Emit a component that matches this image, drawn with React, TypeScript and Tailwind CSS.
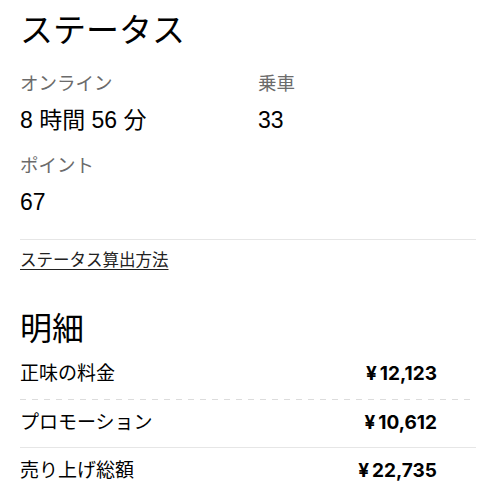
import React from 'react';

const stats = [
    { label: 'オンライン', value: '8 時間 56 分' },
    { label: '乗車', value: '33' },
    { label: 'ポイント', value: '67' },
];

const rows = [
    { label: '正味の料金', amount: '12,123', h: 'h-[50px]' },
    { label: 'プロモーション', amount: '10,612', h: 'h-[47px]' },
    { label: '売り上げ総額', amount: '22,735', h: 'h-[46px]' },
];

function Divider({ dashed }: { dashed?: boolean }) {
    if (dashed) {
        return <div className="h-px bg-[repeating-linear-gradient(to_right,#dcdcdc_0_6px,transparent_6px_12px)]" />;
    }
    return <div className="h-px bg-[#e6e6e6]" />;
}

export default function App() {
    return (
        <div className="w-[496px] h-[500px] bg-white px-5 text-black overflow-hidden font-['Liberation_Sans','Noto_Sans_CJK_JP',sans-serif]">
            <h1 className="h-[62px] leading-[62px] text-[33px] font-normal">ステータス</h1>

            <div className="grid grid-cols-[238px_1fr] mt-[10px] gap-y-[19px]">
                {stats.map(s => (
                    <div key={s.label}>
                        <div className="text-[18.5px] leading-[24px] text-[#6b6b6b]">{s.label}</div>
                        <div className="mt-[9px] text-[23px] leading-[30px]">{s.value}</div>
                    </div>
                ))}
            </div>

            <div className="mt-[22px]">
                <Divider />
            </div>
            <a className="block mt-[8px] text-[16.5px] leading-[24px] underline underline-offset-[3px] text-[#222]" href="#">
                ステータス算出方法
            </a>

            <h2 className="mt-[37px] text-[32px] leading-[40px] font-normal">明細</h2>

            <div>
                {rows.map((r, i) => (
                    <React.Fragment key={r.label}>
                        <div className={`${r.h} flex items-center justify-between pr-[39px]`}>
                            <span className="text-[19px]">{r.label}</span>
                            <span className="text-[19px] font-bold font-['Inter','Noto_Sans_CJK_JP',sans-serif]">
                                <span className="mr-[3px]">¥</span>{r.amount}
                            </span>
                        </div>
                        {i === 0 && <Divider dashed />}
                        {i === 1 && <Divider />}
                    </React.Fragment>
                ))}
            </div>
        </div>
    );
}
